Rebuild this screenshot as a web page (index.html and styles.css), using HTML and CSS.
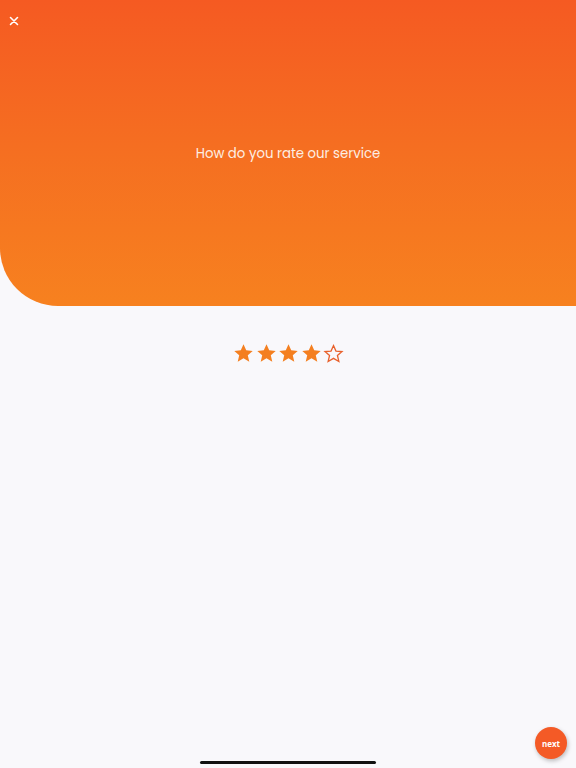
FILE: index.html
```html
<!DOCTYPE html>
<html>
<head>
<meta charset="utf-8">
<link rel="stylesheet" href="styles.css">
</head>
<body>
<div class="screen">
  <header class="hero">
    <div class="topbar">
      <svg class="close" width="10" height="10" viewBox="0 0 10 10"><path d="M1.5 1.5L8.5 8.5M8.5 1.5L1.5 8.5" stroke="#fff" stroke-width="1.6" stroke-linecap="round"/></svg>
    </div>
    <h1 class="title">How do you rate our service</h1>
  </header>
  <div class="stars">
    <svg class="star" viewBox="0 0 24 24"><path d="M12 1.5l3.1 6.9 7.4.7-5.6 4.9 1.7 7.4L12 17.5l-6.6 3.9 1.7-7.4-5.6-4.9 7.4-.7z" fill="#f47f20"/></svg>
    <svg class="star" viewBox="0 0 24 24"><path d="M12 1.5l3.1 6.9 7.4.7-5.6 4.9 1.7 7.4L12 17.5l-6.6 3.9 1.7-7.4-5.6-4.9 7.4-.7z" fill="#f47f20"/></svg>
    <svg class="star" viewBox="0 0 24 24"><path d="M12 1.5l3.1 6.9 7.4.7-5.6 4.9 1.7 7.4L12 17.5l-6.6 3.9 1.7-7.4-5.6-4.9 7.4-.7z" fill="#f47f20"/></svg>
    <svg class="star" viewBox="0 0 24 24"><path d="M12 1.5l3.1 6.9 7.4.7-5.6 4.9 1.7 7.4L12 17.5l-6.6 3.9 1.7-7.4-5.6-4.9 7.4-.7z" fill="#f47f20"/></svg>
    <svg class="star" viewBox="0 0 24 24"><path d="M12 2.9l2.8 6.3 6.9.6-5.2 4.5 1.6 6.8-6.1-3.6-6.1 3.6 1.6-6.8-5.2-4.5 6.9-.6z" fill="none" stroke="#e8612c" stroke-width="1.5"/></svg>
  </div>
  <div class="spacer"></div>
  <div class="bottom">
    <div class="home-indicator"></div>
    <button class="next">next</button>
  </div>
</div>
</body>
</html>
```
FILE: styles.css
```css
html, body {
  margin: 0;
  padding: 0;
}
body {
  width: 576px;
  height: 768px;
  background: #f9f8fb;
  font-family: "Open Sans", "Liberation Sans", sans-serif;
  overflow: hidden;
}
.screen {
  display: flex;
  flex-direction: column;
  height: 768px;
}
.hero {
  height: 306px;
  background: linear-gradient(180deg, #f55a22 0%, #f56f21 50%, #f7811f 100%);
  border-bottom-left-radius: 58px;
  display: flex;
  flex-direction: column;
}
.topbar {
  height: 42px;
  padding: 16px 0 0 9px;
  box-sizing: border-box;
}
.close {
  display: block;
}
.title {
  margin: 102px 0 0;
  text-align: center;
  font-family: "Poppins", "Inter", "Open Sans", sans-serif;
  font-weight: 400;
  font-size: 13.3px;
  color: #fdeee3;
}
.stars {
  display: flex;
  justify-content: center;
  gap: 1.5px;
  margin-top: 37px;
  padding-left: 1px;
}
.star {
  width: 21px;
  height: 21px;
  display: block;
}
.spacer {
  flex: 1;
}
.bottom {
  position: relative;
  height: 30px;
}
.home-indicator {
  position: absolute;
  left: 200px;
  top: 23px;
  width: 176px;
  height: 3px;
  border-radius: 2px;
  background: #111;
}
.next {
  position: absolute;
  left: 535px;
  top: -11px;
  width: 32px;
  height: 32px;
  border-radius: 50%;
  border: none;
  padding: 0;
  background: #f45a26;
  color: #fff;
  font-family: "Open Sans", "Liberation Sans", sans-serif;
  font-weight: 700;
  font-size: 8px;
  box-shadow: 1px 2px 4px rgba(0,0,0,0.25);
}
```
